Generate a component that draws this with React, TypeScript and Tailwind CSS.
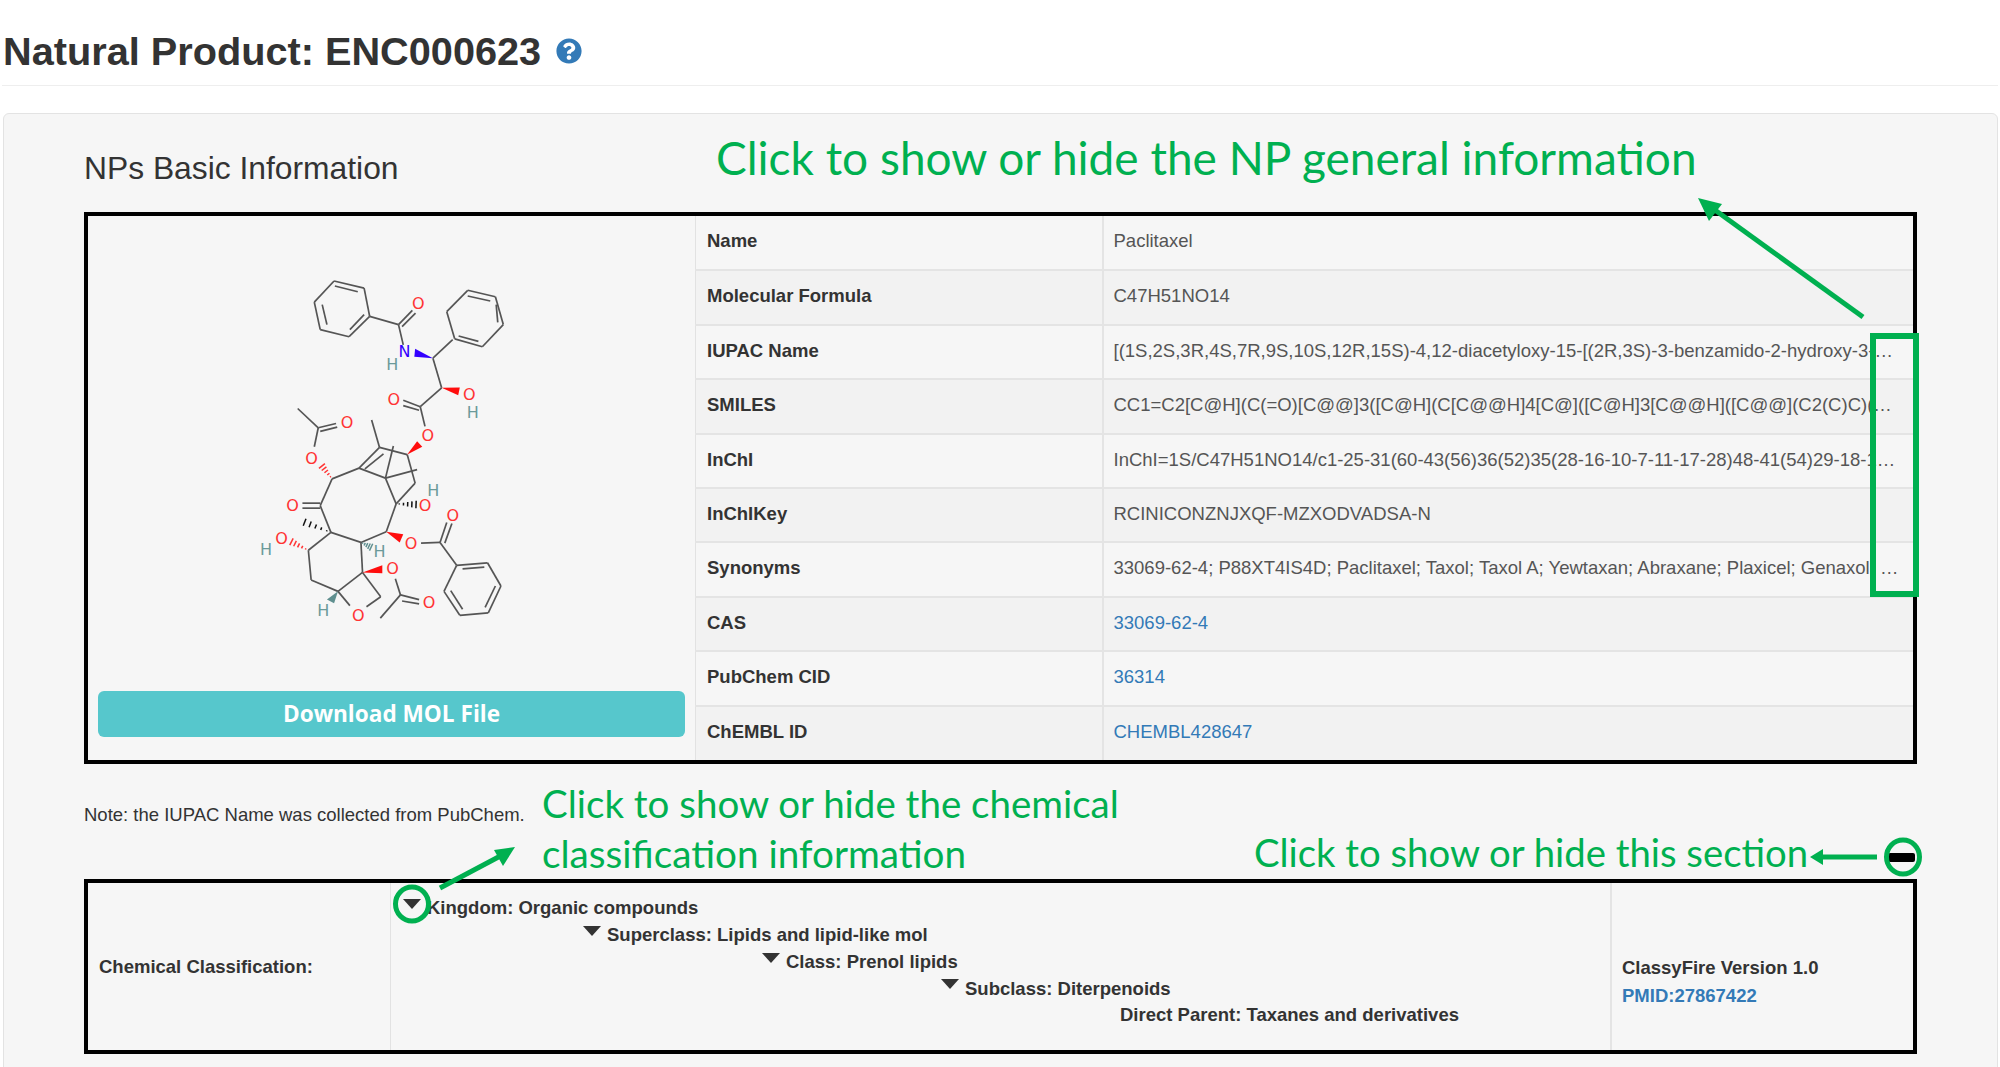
import React from 'react';
import { FaQuestionCircle } from 'react-icons/fa';

// molecule was traced from the zoomed picture, so coords are in that space
const sx = (x: number) => x / 2.529 - 101;
const sy = (y: number) => y / 2.8 - 33;

const BONDS: number[][] = [
  [640, 196, 716, 216], [716, 216, 730, 295], [730, 295, 678, 352], [678, 352, 605, 332], [605, 332, 590, 255], [590, 255, 640, 196],
  [642, 210, 700, 226], [610, 262, 622, 318], [716, 290, 680, 332],
  [730, 295, 803, 318], [803, 318, 838, 278], [812, 324, 846, 286], [803, 318, 815, 375],
  [890, 412, 940, 360],
  [978, 222, 1048, 240], [1048, 240, 1068, 318], [1068, 318, 1015, 380], [1015, 380, 945, 358], [945, 358, 925, 282], [925, 282, 978, 222],
  [978, 238, 1035, 252], [1050, 262, 1054, 312], [1005, 365, 955, 350],
  [890, 412, 912, 495], [912, 495, 858, 548], [858, 548, 815, 530], [855, 558, 815, 545], [858, 548, 870, 603],
  [825, 682, 755, 662], [755, 662, 735, 585], [755, 662, 703, 720], [765, 680, 718, 722], [703, 720, 635, 750], [703, 720, 770, 748],
  [770, 748, 790, 658], [770, 748, 850, 724], [825, 682, 845, 762], [845, 762, 797, 820], [770, 748, 797, 820],
  [797, 820, 772, 898], [772, 898, 708, 928], [708, 928, 632, 900], [632, 900, 605, 825], [605, 825, 635, 750],
  [605, 818, 560, 818], [605, 832, 560, 832],
  [590, 660, 600, 607], [600, 607, 645, 595], [605, 617, 648, 605], [600, 607, 548, 553],
  [860, 930, 908, 928], [908, 928, 925, 872], [920, 930, 938, 875], [908, 928, 950, 992],
  [950, 992, 1028, 985], [1028, 985, 1062, 1050], [1062, 1050, 1030, 1125], [1030, 1125, 958, 1132], [958, 1132, 918, 1065], [918, 1065, 950, 992],
  [965, 1002, 1020, 997], [1048, 1050, 1022, 1110], [965, 1115, 935, 1063],
  [632, 900, 575, 950], [575, 950, 582, 1033], [582, 1033, 650, 1065], [650, 1065, 712, 1012], [708, 928, 712, 1012],
  [795, 1030, 808, 1075], [808, 1075, 855, 1088], [812, 1092, 855, 1100], [808, 1075, 757, 1140],
  [712, 1012, 758, 1080], [758, 1080, 722, 1108], [650, 1065, 680, 1105],
];

const WEDGES: { pts: number[]; fill: string }[] = [
  { pts: [890, 412, 845, 386, 843, 408], fill: '#3300ff' },
  { pts: [912, 495, 958, 494, 954, 516], fill: '#ff0d0d' },
  { pts: [825, 682, 850, 645, 863, 660], fill: '#ff0d0d' },
  { pts: [772, 898, 815, 905, 806, 928], fill: '#ff0d0d' },
  { pts: [712, 1012, 762, 992, 762, 1014], fill: '#ff0d0d' },
  { pts: [650, 1065, 622, 1088, 640, 1098], fill: '#5f8f8f' },
];

const HASHES: { from: number[]; to: number[]; color: string }[] = [
  { from: [635, 750], to: [608, 712], color: '#ff3333' },
  { from: [797, 820], to: [850, 822], color: '#111111' },
  { from: [632, 900], to: [562, 870], color: '#111111' },
  { from: [575, 950], to: [530, 925], color: '#ff3333' },
  { from: [708, 928], to: [735, 942], color: '#5f8f8f' },
];

const ATOMS: { t: string; x: number; y: number; c: string }[] = [
  { t: 'O', x: 853, y: 258, c: '#ff3333' },
  { t: 'N', x: 818, y: 393, c: '#3300ff' },
  { t: 'H', x: 787, y: 428, c: '#6b9a9a' },
  { t: 'O', x: 982, y: 512, c: '#ff3333' },
  { t: 'H', x: 991, y: 562, c: '#6b9a9a' },
  { t: 'O', x: 791, y: 527, c: '#ff3333' },
  { t: 'O', x: 877, y: 627, c: '#ff3333' },
  { t: 'O', x: 673, y: 592, c: '#ff3333' },
  { t: 'O', x: 583, y: 692, c: '#ff3333' },
  { t: 'H', x: 891, y: 780, c: '#6b9a9a' },
  { t: 'O', x: 870, y: 822, c: '#ff3333' },
  { t: 'O', x: 535, y: 822, c: '#ff3333' },
  { t: 'O', x: 940, y: 850, c: '#ff3333' },
  { t: 'O', x: 835, y: 930, c: '#ff3333' },
  { t: 'O', x: 507, y: 915, c: '#ff3333' },
  { t: 'H', x: 468, y: 945, c: '#6b9a9a' },
  { t: 'H', x: 755, y: 953, c: '#6b9a9a' },
  { t: 'O', x: 788, y: 1000, c: '#ff3333' },
  { t: 'O', x: 880, y: 1095, c: '#ff3333' },
  { t: 'H', x: 613, y: 1118, c: '#6b9a9a' },
  { t: 'O', x: 701, y: 1130, c: '#ff3333' },
];

const Molecule = () => (
  <svg viewBox="0 0 420 420" className="h-[420px] w-[420px]">
    {BONDS.map((b, i) => (
      <line key={i} x1={sx(b[0])} y1={sy(b[1])} x2={sx(b[2])} y2={sy(b[3])} stroke="#555555" strokeWidth={1.7} />
    ))}
    {WEDGES.map((w, i) => (
      <polygon
        key={i}
        points={`${sx(w.pts[0])},${sy(w.pts[1])} ${sx(w.pts[2])},${sy(w.pts[3])} ${sx(w.pts[4])},${sy(w.pts[5])}`}
        fill={w.fill}
      />
    ))}
    {HASHES.map((h, i) => {
      const x1 = sx(h.from[0]), y1 = sy(h.from[1]), x2 = sx(h.to[0]), y2 = sy(h.to[1]);
      const len = Math.hypot(x2 - x1, y2 - y1);
      const nx = -(y2 - y1) / len, ny = (x2 - x1) / len;
      return [0.15, 0.35, 0.55, 0.75, 0.95].map((f) => (
        <line
          key={`${i}-${f}`}
          x1={x1 + (x2 - x1) * f + nx * f * 4}
          y1={y1 + (y2 - y1) * f + ny * f * 4}
          x2={x1 + (x2 - x1) * f - nx * f * 4}
          y2={y1 + (y2 - y1) * f - ny * f * 4}
          stroke={h.color}
          strokeWidth={1.5}
        />
      ));
    })}
    {ATOMS.map((a, i) => (
      <text
        key={i}
        x={sx(a.x)}
        y={sy(a.y) + 6}
        fill={a.c}
        textAnchor="middle"
        className="font-['DejaVu_Sans',sans-serif] text-[16px]"
      >
        {a.t}
      </text>
    ))}
  </svg>
);

const ROWS: { label: string; value: string; link?: boolean }[] = [
  { label: 'Name', value: 'Paclitaxel' },
  { label: 'Molecular Formula', value: 'C47H51NO14' },
  { label: 'IUPAC Name', value: '[(1S,2S,3R,4S,7R,9S,10S,12R,15S)-4,12-diacetyloxy-15-[(2R,3S)-3-benzamido-2-hydroxy-3-phenylpropanoyl]oxy-1,9-dihydroxy-10,14,17,17-tetramethyl-11-oxo-6-oxatetracyclo' },
  { label: 'SMILES', value: 'CC1=C2[C@H](C(=O)[C@@]3([C@H](C[C@@H]4[C@]([C@H]3[C@@H]([C@@](C2(C)C)(C[C@@H]1OC(=O)[C@@H]([C@H](C5=CC=CC=C5)NC(=O)C6=CC=CC=C6)O)O)OC(=O)C7=CC=CC=C7)' },
  { label: 'InChI', value: 'InChI=1S/C47H51NO14/c1-25-31(60-43(56)36(52)35(28-16-10-7-11-17-28)48-41(54)29-18-12-8-13-19-29)23-47(55)40(61-42(53)30-20-14-9-15-21-30)38-45(6,32(51)22-33-46' },
  { label: 'InChIKey', value: 'RCINICONZNJXQF-MZXODVADSA-N' },
  { label: 'Synonyms', value: '33069-62-4; P88XT4IS4D; Paclitaxel; Taxol; Taxol A; Yewtaxan; Abraxane; Plaxicel; Genaxol; Onxol; Paxene; Praxel; Ebetaxel' },
  { label: 'CAS', value: '33069-62-4', link: true },
  { label: 'PubChem CID', value: '36314', link: true },
  { label: 'ChEMBL ID', value: 'CHEMBL428647', link: true },
];

const TREE = [
  { text: 'Kingdom: Organic compounds', indent: 'pl-[12px]', arrow: true },
  { text: 'Superclass: Lipids and lipid-like mol', indent: 'pl-[192px]', arrow: true },
  { text: 'Class: Prenol lipids', indent: 'pl-[371px]', arrow: true },
  { text: 'Subclass: Diterpenoids', indent: 'pl-[550px]', arrow: true },
  { text: 'Direct Parent: Taxanes and derivatives', indent: 'pl-[729px]', arrow: false },
];

const Note = ({ className, children }: { className: string; children: React.ReactNode }) => (
  <div className={`absolute whitespace-nowrap font-['Lato',sans-serif] leading-none text-[#00b050] ${className}`}>
    {children}
  </div>
);

export default function App() {
  return (
    <div className="relative h-[1067px] w-[2000px] overflow-hidden bg-white font-['Liberation_Sans',sans-serif] text-[#333]">
      <div className="mx-[2px] flex h-[86px] items-start border-b border-[#eee] pt-[28px]">
        <h1 className="pl-[1px] text-[39.7px] font-bold leading-[46px]">Natural Product: ENC000623</h1>
        <FaQuestionCircle className="ml-[15px] mt-[10px] text-[26px] text-[#337ab7]" />
      </div>

      <div className="ml-[3px] mr-[2px] mt-[27px] h-[1000px] rounded-[6px] border border-[#e3e3e3] bg-[#f6f6f6] px-[80px]">
        <h2 className="pt-[35px] text-[31.8px] leading-[38px]">NPs Basic Information</h2>

        <div className="mt-[25px] flex h-[552px] w-[1833px] border-4 border-black">
          <div className="flex w-[607px] flex-col">
            <div className="flex flex-1 items-center justify-center">
              <Molecule />
            </div>
            <button className="mx-[10px] mb-[23px] h-[46px] rounded-[6px] bg-[#56c7cc] font-['Open_Sans',sans-serif] text-[22.6px] font-bold text-white">
              Download MOL File
            </button>
          </div>
          <table className="h-[544px] w-[1218px] table-fixed border-l border-[#e2e2e2] text-[18.5px] leading-[27px]">
            <tbody>
              {ROWS.map((r, i) => (
                <tr key={r.label} className={`h-[54.4px] ${i % 2 ? 'bg-[#f2f2f2]' : ''} ${i ? 'border-t-2 border-[#e4e4e4]' : ''}`}>
                  <td className="w-[407px] border-r-2 border-[#e4e4e4] px-[11px] pb-[11px] pt-[11px] align-top font-bold">{r.label}</td>
                  <td className={`truncate pb-[11px] pl-[10px] pr-[12px] pt-[11px] align-top ${r.link ? 'text-[#337ab7]' : 'text-[#555]'}`}>
                    {r.value}
                  </td>
                </tr>
              ))}
            </tbody>
          </table>
        </div>

        <p className="mt-[37px] text-[18.5px] leading-[27px]">Note: the IUPAC Name was collected from PubChem.</p>

        <div className="mt-[51px] flex h-[175px] w-[1833px] border-4 border-black text-[18.5px] font-bold">
          <div className="flex w-[303px] items-center border-r border-[#e2e2e2] pl-[11px]">Chemical Classification:</div>
          <div className="w-[1221px] border-r-2 border-[#e4e4e4] pt-[12px]">
            {TREE.map((n) => (
              <div key={n.text} className={`flex h-[26.7px] items-center ${n.indent}`}>
                {n.arrow && (
                  <svg viewBox="0 0 18 10" className="mb-[8px] mr-[6px] h-[10px] w-[18px] fill-[#333]">
                    <polygon points="0,0 18,0 9,10" />
                  </svg>
                )}
                {n.text}
              </div>
            ))}
          </div>
          <div className="flex flex-col justify-center pl-[10px] pt-[30px] leading-[28px]">
            <div>ClassyFire Version 1.0</div>
            <div className="text-[#337ab7]">PMID:27867422</div>
          </div>
        </div>
      </div>

      {/* annotations drawn over the page */}
      <Note className="left-[716px] top-[135px] text-[46px]">Click to show or hide the NP general information</Note>
      <Note className="left-[542px] top-[784px] text-[38.5px]">Click to show or hide the chemical</Note>
      <Note className="left-[542px] top-[834px] text-[38.7px]">classification information</Note>
      <Note className="left-[1254px] top-[833px] text-[38.3px]">Click to show or hide this section</Note>

      <div className="absolute left-[1888px] top-[853px] h-[9px] w-[27px] rounded-[2px] bg-black" />

      <svg className="absolute left-0 top-0 h-[1067px] w-[2000px]" viewBox="0 0 2000 1067" fill="none">
        <rect x="1873" y="336" width="43" height="258" stroke="#00b050" strokeWidth="6" />
        <ellipse cx="412" cy="904" rx="16.5" ry="17" stroke="#00b050" strokeWidth="5" />
        <ellipse cx="1903" cy="857" rx="16.5" ry="17" stroke="#00b050" strokeWidth="5" />
        <line x1="1863" y1="317" x2="1708" y2="205" stroke="#00b050" strokeWidth="5" />
        <polygon points="1698,198 1722,204 1709,221" fill="#00b050" />
        <line x1="440" y1="888" x2="506" y2="853" stroke="#00b050" strokeWidth="5" />
        <polygon points="515,847 503,866 494,850" fill="#00b050" />
        <line x1="1877" y1="857" x2="1820" y2="857" stroke="#00b050" strokeWidth="5" />
        <polygon points="1810,857 1823,849 1823,865" fill="#00b050" />
      </svg>
    </div>
  );
}
